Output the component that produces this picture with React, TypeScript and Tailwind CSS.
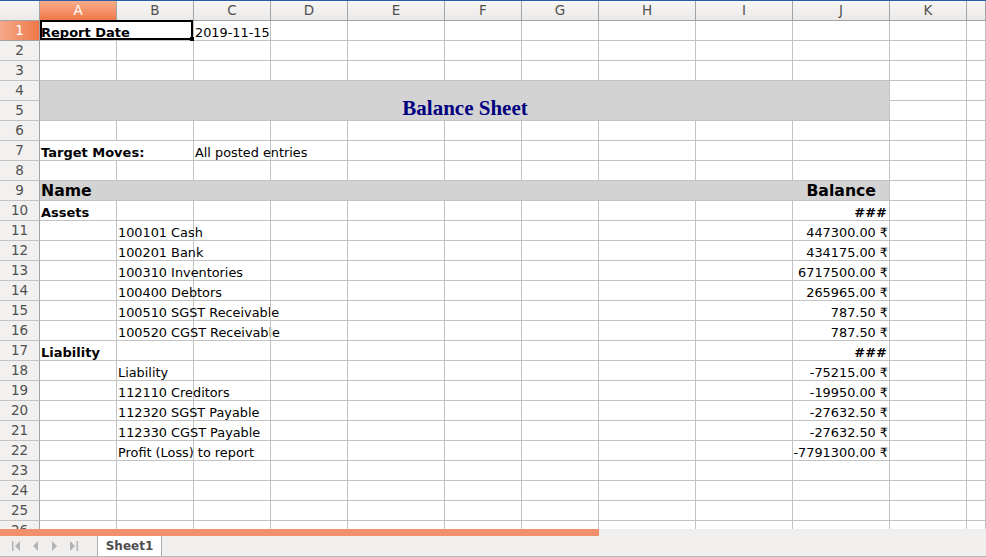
import type { ReactNode } from "react";

type Cell = { span?: number; rowSpan?: boolean; node?: ReactNode; cls?: string; select?: boolean };

const COLS = ["A", "B", "C", "D", "E", "F", "G", "H", "I", "J", "K", ""];
const SPAN: Record<number, string> = { 1: "", 2: "col-span-2", 10: "col-span-10" };

const txt = (s: string) => <span className="text-[12.85px] leading-[15px]">{s}</span>;
const bold = (s: string) => <span className="text-[13px] leading-[15px] font-bold">{s}</span>;

const accounts: [number, string, string][] = [
  [11, "100101 Cash", "447300.00 ₹"],
  [12, "100201 Bank", "434175.00 ₹"],
  [13, "100310 Inventories", "6717500.00 ₹"],
  [14, "100400 Debtors", "265965.00 ₹"],
  [15, "100510 SGST Receivable", "787.50 ₹"],
  [16, "100520 CGST Receivable", "787.50 ₹"],
  [18, "Liability", "-75215.00 ₹"],
  [19, "112110 Creditors", "-19950.00 ₹"],
  [20, "112320 SGST Payable", "-27632.50 ₹"],
  [21, "112330 CGST Payable", "-27632.50 ₹"],
  [22, "Profit (Loss) to report", "-7791300.00 ₹"],
];

const sheet: Record<number, Record<number, Cell>> = {
  1: { 0: { span: 2, node: bold("Report Date"), select: true }, 2: { node: txt("2019-11-15") } },
  4: {
    0: {
      span: 10,
      rowSpan: true,
      cls: "bg-[#d3d3d3] justify-center",
      node: (
        <span className="font-['Liberation_Serif',serif] font-bold text-[21px] leading-[23px] text-[#000080]">
          Balance Sheet
        </span>
      ),
    },
  },
  7: { 0: { span: 2, node: bold("Target Moves:") }, 2: { node: txt("All posted entries") } },
  9: {
    0: {
      span: 10,
      cls: "bg-[#d3d3d3] justify-between pr-[13px]",
      node: (
        <>
          <span className="text-[15.7px] leading-[19px] font-bold">Name</span>
          <span className="text-[15.7px] leading-[19px] font-bold">Balance</span>
        </>
      ),
    },
  },
  10: { 0: { node: bold("Assets") }, 9: { node: bold("###"), cls: "justify-end pr-[2px]" } },
  17: { 0: { node: bold("Liability") }, 9: { node: bold("###"), cls: "justify-end pr-[2px]" } },
};
accounts.forEach(([r, name, bal]) => {
  sheet[r] = { 1: { node: txt(name) }, 9: { node: txt(bal), cls: "justify-end pr-[1px]" } };
});

function rowCells(r: number) {
  const spec = sheet[r] || {};
  const out: ReactNode[] = [];
  let c = r === 5 ? 10 : 0;
  while (c < COLS.length) {
    const cell = spec[c];
    const span = cell?.span ?? 1;
    out.push(
      <div
        key={`${r}-${c}`}
        className={`relative flex items-end whitespace-nowrap pl-[1px] border-r border-b border-[#c3c3c3] ${SPAN[span]} ${
          cell?.rowSpan ? "row-span-2" : ""
        } ${cell?.cls ?? ""}`}
      >
        {cell?.node}
        {cell?.select && (
          <div className="absolute left-0 -top-px right-0 bottom-0 border-2 border-black z-10">
            <div className="absolute -right-[3px] -bottom-[3px] w-[4px] h-[4px] bg-black" />
          </div>
        )}
      </div>
    );
    c += span;
  }
  return out;
}

const Arrow = ({ dir, bar }: { dir: "l" | "r"; bar?: boolean }) => (
  <svg width="9" height="10" viewBox="0 0 9 10">
    {dir === "l" ? (
      <>
        {bar && <rect x="0" y="0" width="1.5" height="10" fill="#b3b3b3" />}
        <path d={bar ? "M8 0 L3 5 L8 10 Z" : "M7 0 L2 5 L7 10 Z"} fill="#b3b3b3" />
      </>
    ) : (
      <>
        <path d={bar ? "M1 0 L6 5 L1 10 Z" : "M2 0 L7 5 L2 10 Z"} fill="#b3b3b3" />
        {bar && <rect x="7.5" y="0" width="1.5" height="10" fill="#b3b3b3" />}
      </>
    )}
  </svg>
);

export default function App() {
  const rows = Array.from({ length: 26 }, (_, i) => i + 1);
  return (
    <div className="w-[986px] h-[557px] overflow-hidden flex flex-col bg-white font-['DejaVu_Sans',sans-serif] text-black">
      <div className="h-px bg-[#2a5ea6]" />
      <div className="h-[528px] overflow-hidden">
        <div className="grid grid-cols-[40px_77px_77px_77px_77px_97px_77px_77px_97px_97px_97px_77px_1fr] auto-rows-[20px]">
          {/* column headers */}
          <div className="bg-gradient-to-b from-[#f7f6f5] to-[#ebeae8] border-r border-b border-[#a3a3a3]" />
          {COLS.map((c, i) => (
            <div
              key={c + i}
              className={`flex items-center justify-center text-[13.5px] border-r border-b border-[#a3a3a3] ${
                i === 0
                  ? "bg-gradient-to-b from-[#f8ad8c] to-[#ef7845] text-white"
                  : "bg-gradient-to-b from-[#f7f6f5] to-[#ebeae8] text-[#505050]"
              }`}
            >
              {c}
            </div>
          ))}
          {rows.map((r) => [
            <div
              key={`h${r}`}
              className={`flex items-center justify-center text-[13.5px] border-r border-b ${
                r === 1
                  ? "bg-gradient-to-r from-[#f5a98a] to-[#ef7845] text-white border-[#a3a3a3]"
                  : "bg-[#f2f1f0] text-[#505050] border-[#c3c3c3] border-r-[#a3a3a3]"
              }`}
            >
              {r}
            </div>,
            ...rowCells(r),
          ])}
        </div>
      </div>
      <div className="h-[7px] flex">
        <div className="w-[599px] bg-[#f2906b]" />
        <div className="flex-1 bg-[#f0efed]" />
      </div>
      <div className="h-[21px] flex items-stretch bg-[#f0efed] border-b border-[#b4b4b4]">
        <div className="w-[97px] flex items-center pl-[12px] gap-[10px]">
          <Arrow dir="l" bar />
          <Arrow dir="l" />
          <Arrow dir="r" />
          <Arrow dir="r" bar />
        </div>
        <div className="w-[65px] bg-white border-x border-[#adadad] flex items-center justify-center text-[12px] font-bold text-[#4d4d4d]">
          Sheet1
        </div>
      </div>
    </div>
  );
}
